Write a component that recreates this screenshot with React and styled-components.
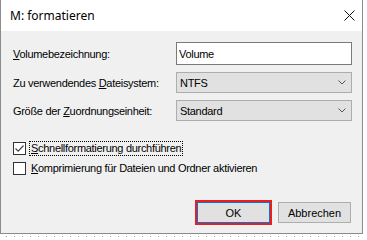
import React from "react";
import styled, { createGlobalStyle } from "styled-components";

const GlobalStyle = createGlobalStyle`
  html, body {
    margin: 0;
    padding: 0;
    background: #ffffff;
  }
  body {
    font-family: "Liberation Sans", Arial, sans-serif;
    font-size: 11px;
    letter-spacing: -0.3px;
    color: #000;
  }
`;

const Page = styled.div`
  width: 367px;
  height: 240px;
  display: flex;
  flex-direction: column;
  overflow: hidden;
`;

const Window = styled.div`
  width: 363px;
  height: 234px;
  box-sizing: border-box;
  border: 1px solid #8c8c8c;
  border-top: none;
  display: flex;
  flex-direction: column;
  background: #f0f0f0;
`;

const TitleBar = styled.div`
  height: 31px;
  flex: none;
  background: #ffffff;
  display: flex;
  align-items: center;
  justify-content: space-between;
  padding: 0 7px 0 9px;
`;

const Title = styled.span`
  font-family: "Noto Sans", "Segoe UI", sans-serif;
  font-size: 12px;
  letter-spacing: 0;
  color: #000;
`;

const CloseButton = styled.div`
  width: 12px;
  height: 12px;
  display: flex;
  align-items: center;
  justify-content: center;
`;

const Body = styled.div`
  flex: 1;
  display: flex;
  flex-direction: column;
  padding: 11px 10px 10px 12px;
`;

const FormGrid = styled.div`
  display: grid;
  grid-template-columns: 163px 176px;
  row-gap: 7px;
  align-items: center;
`;

const Label = styled.div`
  white-space: nowrap;
`;

const Key = styled.span`
  text-decoration: underline;
  text-underline-offset: 1px;
`;

const TextBox = styled.div`
  height: 23px;
  box-sizing: border-box;
  border: 1px solid #7a7a7a;
  background: #fff;
  display: flex;
  align-items: center;
  padding-left: 2px;
`;

const Select = styled.div`
  height: 21px;
  box-sizing: border-box;
  border: 1px solid #adadad;
  background: #e1e1e1;
  display: flex;
  align-items: center;
  justify-content: space-between;
  padding: 0 5px 0 3px;
`;

const Options = styled.div`
  display: flex;
  flex-direction: column;
  margin-top: 20px;
  gap: 6px;
`;

const CheckRow = styled.div`
  display: flex;
  align-items: center;
  height: 14px;
  gap: 3px;
`;

const Box = styled.div`
  width: 13px;
  height: 13px;
  box-sizing: border-box;
  border: 1px solid #333;
  background: #fff;
  display: flex;
  align-items: center;
  justify-content: center;
`;

const CheckText = styled.span`
  padding: 0 1px 1px 1px;
  border: 1px dotted ${(p) => (p.focused ? "#000" : "transparent")};
  white-space: nowrap;
`;

const ButtonRow = styled.div`
  margin-top: auto;
  display: flex;
  justify-content: flex-end;
  gap: 8px;
  padding-right: 1px;
`;

const Button = styled.div`
  width: 73px;
  height: 21px;
  box-sizing: border-box;
  border: 1px solid ${(p) => (p.primary ? "#0078d7" : "#adadad")};
  background: #e1e1e1;
  display: flex;
  align-items: center;
  justify-content: center;
  letter-spacing: 0;
  box-shadow: ${(p) => (p.marked ? "0 0 0 2px #ee1c1c" : "none")};
`;

const BottomStrip = styled.div`
  height: 6px;
  width: 363px;
  background-image: repeating-linear-gradient(
    90deg,
    transparent 0 6px,
    #9a9a9a 6px 7px,
    transparent 7px 8px
  );
  background-size: 8px 1px;
  background-repeat: repeat-x;
  background-position: 0 2px;
`;

const Chevron = () => (
  <svg width="8" height="5" viewBox="0 0 8 5">
    <path d="M0.5 0.5 L4 4 L7.5 0.5" fill="none" stroke="#555" strokeWidth="1" />
  </svg>
);

const CloseIcon = () => (
  <svg width="11" height="11" viewBox="0 0 11 11">
    <path d="M0.5 0.5 L10.5 10.5 M10.5 0.5 L0.5 10.5" stroke="#111" strokeWidth="1" />
  </svg>
);

const CheckIcon = () => (
  <svg width="11" height="11" viewBox="0 0 11 11">
    <path d="M1.5 5.5 L4.2 8.2 L9.5 2.5" fill="none" stroke="#444" strokeWidth="1.2" />
  </svg>
);

export default function App() {
  return (
    <>
      <GlobalStyle />
      <Page>
        <Window>
          <TitleBar>
            <Title>M: formatieren</Title>
            <CloseButton>
              <CloseIcon />
            </CloseButton>
          </TitleBar>
          <Body>
            <FormGrid>
              <Label>
                <Key>V</Key>olumebezeichnung:
              </Label>
              <TextBox>Volume</TextBox>
              <Label>
                Zu verwendendes <Key>D</Key>ateisystem:
              </Label>
              <Select>
                NTFS
                <Chevron />
              </Select>
              <Label>
                Größe der <Key>Z</Key>uordnungseinheit:
              </Label>
              <Select>
                Standard
                <Chevron />
              </Select>
            </FormGrid>
            <Options>
              <CheckRow>
                <Box>
                  <CheckIcon />
                </Box>
                <CheckText focused>
                  <Key>S</Key>chnellformatierung durchführen
                </CheckText>
              </CheckRow>
              <CheckRow>
                <Box />
                <CheckText>
                  <Key>K</Key>omprimierung für Dateien und Ordner aktivieren
                </CheckText>
              </CheckRow>
            </Options>
            <ButtonRow>
              <Button primary marked>
                OK
              </Button>
              <Button>Abbrechen</Button>
            </ButtonRow>
          </Body>
        </Window>
        <BottomStrip />
      </Page>
    </>
  );
}
